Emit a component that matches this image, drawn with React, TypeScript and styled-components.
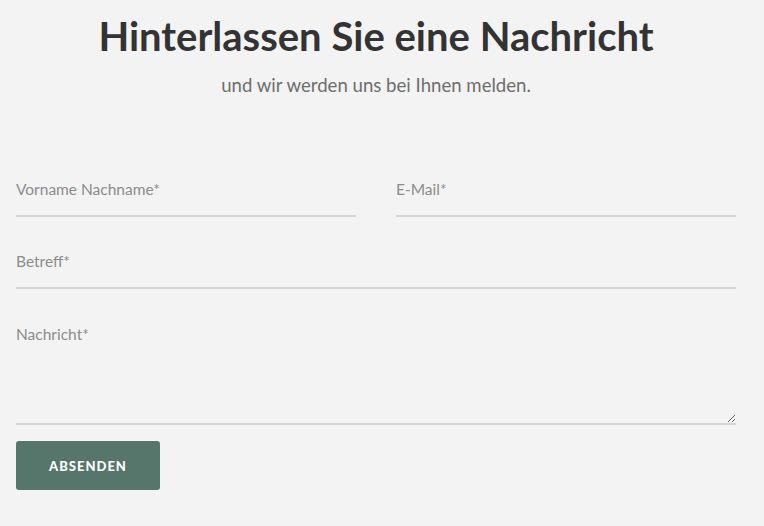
import React from 'react';
import styled, { createGlobalStyle } from 'styled-components';

const GlobalStyle = createGlobalStyle`
    html, body {
        margin: 0;
        padding: 0;
        background: #f3f3f3;
        font-family: Lato, 'Open Sans', sans-serif;
    }
`;

const Page = styled.div`
    width: 764px;
    min-height: 526px;
    box-sizing: border-box;
    padding: 13px 28px 0 16px;
`;

const Header = styled.header`
    text-align: center;
    margin-bottom: 66px;
`;

const Title = styled.h1`
    margin: 0;
    font-size: 40px;
    line-height: 46px;
    font-weight: 700;
    color: #333333;
`;

const Subtitle = styled.p`
    margin: 14px 0 0;
    font-size: 18.6px;
    line-height: 24px;
    color: #6e6e6e;
`;

const Form = styled.form`
    display: flex;
    flex-direction: column;
    gap: 18px;
`;

const Row = styled.div`
    display: grid;
    grid-template-columns: 1fr 1fr;
    gap: 40px;
`;

const Input = styled.input`
    display: block;
    width: 100%;
    box-sizing: border-box;
    height: 54px;
    padding: 0;
    border: none;
    border-bottom: 2px solid #d6d6d6;
    background: transparent;
    font-family: inherit;
    font-size: 15.5px;
    color: #444;
    outline: none;

    &::placeholder {
        color: #8c8c8c;
    }
`;

const TextArea = styled.textarea`
    display: block;
    width: 100%;
    box-sizing: border-box;
    height: 118px;
    padding: 18px 0 0;
    border: none;
    border-bottom: 2px solid #d6d6d6;
    background: transparent;
    font-family: inherit;
    font-size: 15.5px;
    color: #444;
    outline: none;

    &::placeholder {
        color: #8c8c8c;
    }
`;

const Submit = styled.button`
    align-self: flex-start;
    margin-top: -2px;
    width: 144px;
    height: 49px;
    border: none;
    border-radius: 3px;
    background: #56766c;
    color: #ffffff;
    font-family: inherit;
    font-size: 13px;
    font-weight: 900;
    letter-spacing: 1px;
    text-transform: uppercase;
    cursor: pointer;
`;

export default function App() {
    return (
        <>
            <GlobalStyle />
            <Page>
                <Header>
                    <Title>Hinterlassen Sie eine Nachricht</Title>
                    <Subtitle>und wir werden uns bei Ihnen melden.</Subtitle>
                </Header>
                <Form onSubmit={(e) => e.preventDefault()}>
                    <Row>
                        <Input placeholder='Vorname Nachname*' />
                        <Input type='email' placeholder='E-Mail*' />
                    </Row>
                    <Input placeholder='Betreff*' />
                    <TextArea placeholder='Nachricht*' />
                    <Submit type='submit'>Absenden</Submit>
                </Form>
            </Page>
        </>
    );
}
